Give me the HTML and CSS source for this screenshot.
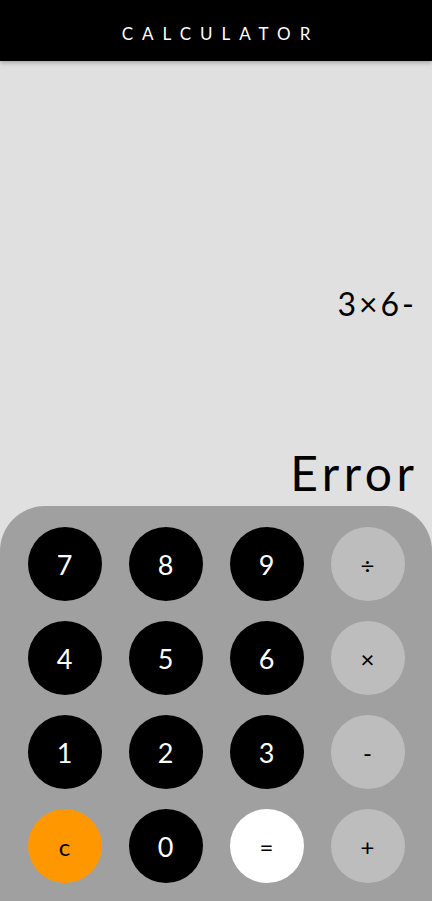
FILE: index.html
```html
<!DOCTYPE html>
<html>
<head>
<meta charset="utf-8">
<link rel="stylesheet" href="styles.css">
</head>
<body>
<div class="app">
  <header class="topbar"><h1 class="title">CALCULATOR</h1></header>
  <section class="display">
    <div class="expr">3×6-</div>
    <div class="result">Error</div>
  </section>
  <section class="keypad">
    <button class="key num">7</button>
    <button class="key num">8</button>
    <button class="key num">9</button>
    <button class="key op">÷</button>
    <button class="key num">4</button>
    <button class="key num">5</button>
    <button class="key num">6</button>
    <button class="key op">×</button>
    <button class="key num">1</button>
    <button class="key num">2</button>
    <button class="key num">3</button>
    <button class="key op">-</button>
    <button class="key clear">c</button>
    <button class="key num">0</button>
    <button class="key equals">=</button>
    <button class="key op">+</button>
  </section>
</div>
</body>
</html>
```
FILE: styles.css
```css
html, body {
  margin: 0;
  padding: 0;
}
body {
  font-family: Lato, "Open Sans", sans-serif;
  background: #e0e0e0;
}
.app {
  width: 432px;
  height: 901px;
  display: flex;
  flex-direction: column;
  background: #e0e0e0;
  overflow: hidden;
}
.topbar {
  height: 61px;
  box-sizing: border-box;
  padding-top: 5px;
  flex: none;
  background: #000;
  display: flex;
  align-items: center;
  justify-content: center;
  box-shadow: 0 2px 4px rgba(0,0,0,0.25);
  position: relative;
  z-index: 1;
}
.title {
  margin: 0;
  color: #fff;
  font-weight: 400;
  font-size: 17px;
  letter-spacing: 9px;
  padding-left: 9px;
}
.display {
  flex: 1;
  display: flex;
  flex-direction: column;
  justify-content: flex-end;
  align-items: flex-end;
  padding: 0 18px 4px;
}
.expr {
  font-size: 32px;
  font-weight: 400;
  letter-spacing: 0.094em;
  margin-right: -0.094em;
  line-height: 1.2;
  color: #000;
  margin-bottom: 121px;
}
.result {
  font-size: 48px;
  font-weight: 400;
  letter-spacing: 0.094em;
  margin-right: -0.094em;
  line-height: 1.2;
  color: #000;
}
.keypad {
  flex: none;
  height: 395px;
  box-sizing: border-box;
  background: #a0a0a0;
  border-radius: 45px 45px 0 0;
  display: grid;
  grid-template-columns: repeat(4, 74px);
  grid-auto-rows: 74px;
  column-gap: 27px;
  row-gap: 20px;
  justify-content: center;
  padding-top: 21px;
}
.key {
  width: 74px;
  height: 74px;
  border: none;
  border-radius: 50%;
  padding: 0;
  font-family: Lato, "Open Sans", sans-serif;
  font-weight: 400;
  font-size: 27px;
  display: flex;
  align-items: center;
  justify-content: center;
}
.num {
  background: #000;
  color: #fff;
}
.op {
  background: #bdbdbd;
  color: #000;
  font-size: 24px;
}
.clear {
  background: #ff9800;
  color: #000;
  font-size: 24px;
}
.equals {
  background: #fff;
  color: #000;
  font-size: 24px;
}
```
